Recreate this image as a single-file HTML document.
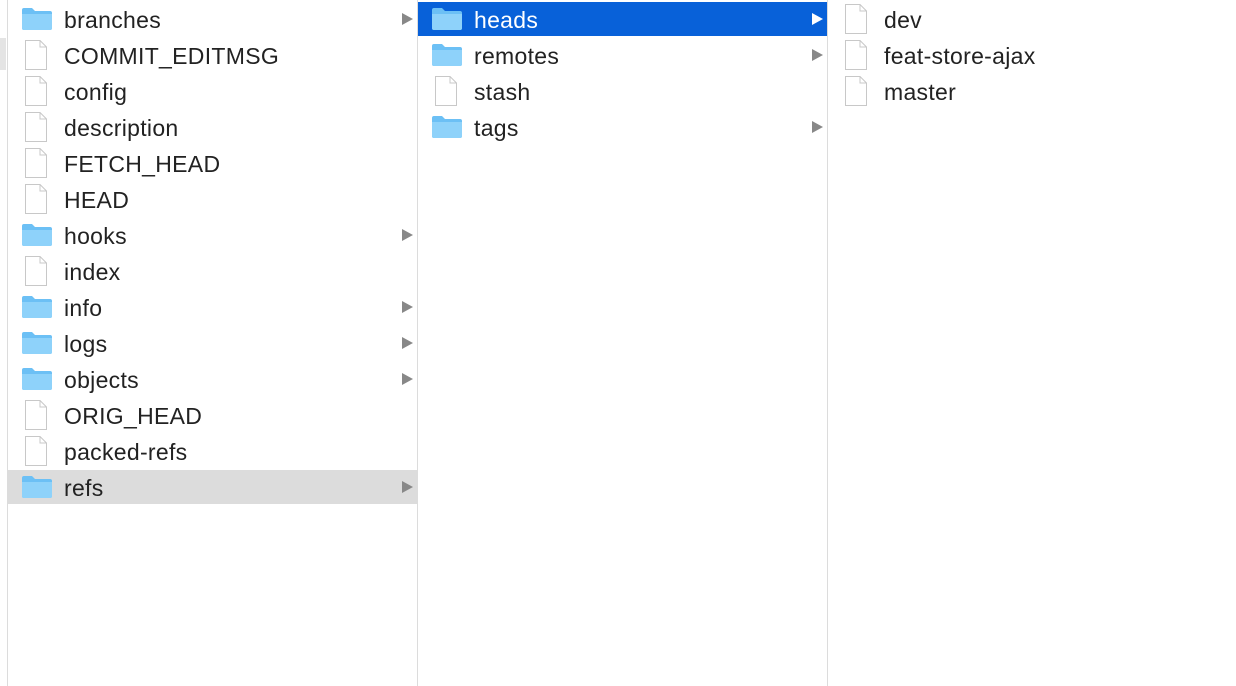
<!DOCTYPE html><html><head><style>
body{margin:0;width:1236px;height:686px;background:#fff;font-family:"Liberation Sans",Helvetica,sans-serif;overflow:hidden;position:relative}
.col{position:absolute;top:0;height:686px;border-left:1px solid #dcdcdc}
.row{position:absolute;left:0;right:0;height:34px;font-size:23px;letter-spacing:0.3px;color:#222}
.row span{position:absolute;left:56px;top:5px}
.sel{background:#0861d9;color:#fff}
.gr{background:#dcdcdc}
.ic{position:absolute}
.arr{position:absolute;right:4px;top:11px;width:0;height:0;border-left:11px solid #888;border-top:6px solid transparent;border-bottom:6px solid transparent}
.sel .arr{border-left-color:#fff}
</style></head><body>
<div style="position:absolute;left:0;top:38px;width:6px;height:32px;background:#e4e4e4"></div>
<svg width="0" height="0" style="position:absolute"><defs>
<symbol id="f" viewBox="0 0 32 24"><path d="M1 3Q1 1 3 1H11L14 4H29Q31 4 31 6V21Q31 23 29 23H3Q1 23 1 21Z" fill="#6cc0f5"/><path d="M1 7H31V21Q31 23 29 23H3Q1 23 1 21Z" fill="#8ed2fa"/></symbol>
<symbol id="d" viewBox="0 0 24 32"><path d="M1.5 1.5H16L22.5 8V30.5H1.5Z" fill="#fff" stroke="#c8c8c8"/><path d="M16 1.5V8H22.5" fill="none" stroke="#c8c8c8"/></symbol>
</defs></svg>
<div class="col" style="left:7px;width:409px" id="c1"></div>
<div class="col" style="left:417px;width:409px" id="c2"></div>
<div class="col" style="left:827px;width:409px" id="c3"></div>
<script>
function fill(id,items){var c=document.getElementById(id),h='';items.forEach(function(it,i){var y=2+i*36;var cls=it[2]||'';h+='<div class="row '+cls+'" style="top:'+y+'px">'+(it[1]?'<svg class="ic" style="left:13px;top:5px" width="32" height="24"><use href="#f"/></svg><div class="arr"></div>':'<svg class="ic" style="left:16px;top:1px" width="24" height="32"><use href="#d"/></svg>')+'<span>'+it[0]+'</span></div>';});c.innerHTML=h;}
fill('c1',[['branches',1],['COMMIT_EDITMSG'],['config'],['description'],['FETCH_HEAD'],['HEAD'],['hooks',1],['index'],['info',1],['logs',1],['objects',1],['ORIG_HEAD'],['packed-refs'],['refs',1,'gr']]);
fill('c2',[['heads',1,'sel'],['remotes',1],['stash'],['tags',1]]);
fill('c3',[['dev'],['feat-store-ajax'],['master']]);
</script>
</body></html>
